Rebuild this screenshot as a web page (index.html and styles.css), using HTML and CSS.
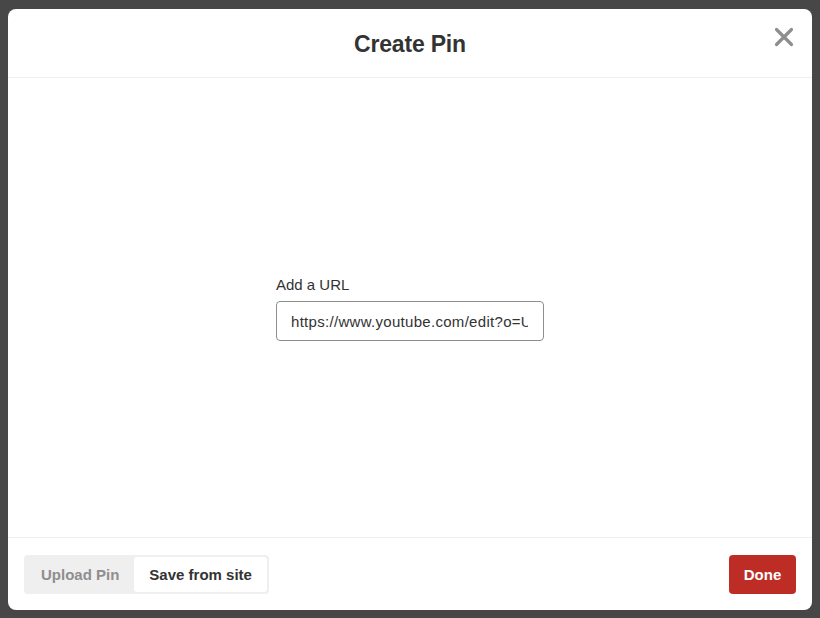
FILE: index.html
```html
<!DOCTYPE html>
<html lang="en">
<head>
    <meta charset="UTF-8">
    <title>Create Pin</title>
    <link rel="stylesheet" href="styles.css">
</head>
<body>
    <div class="modal">
        <div class="modal-header">
            <h1 class="modal-title">Create Pin</h1>
            <button class="close-btn" aria-label="Close">
                <svg width="20" height="20" viewBox="0 0 20 20">
                    <path d="M2.5 2.5 L17.5 17.5 M17.5 2.5 L2.5 17.5" stroke="#8e8e8e" stroke-width="3.2" stroke-linecap="round"/>
                </svg>
            </button>
        </div>

        <div class="modal-body">
            <div class="url-field">
                <label class="url-label" for="url">Add a URL</label>
                <input class="url-input" id="url" type="text" value="https://www.youtube.com/edit?o=U&amp;video_id=">
            </div>
        </div>

        <div class="modal-footer">
            <div class="segmented">
                <button class="segment">Upload Pin</button>
                <button class="segment active">Save from site</button>
            </div>
            <button class="done-btn">Done</button>
        </div>
    </div>
</body>
</html>
```

FILE: styles.css
```css
html, body {
    height: 100%;
}

body {
    margin: 0;
    padding: 9px 8px 8px;
    box-sizing: border-box;
    background-color: #474747;
    font-family: 'Liberation Sans', Arial, sans-serif;
    color: #333;
}

.modal {
    height: 601px;
    background: white;
    border-radius: 8px;
    display: flex;
    flex-direction: column;
    overflow: hidden;
}

/* header */
.modal-header {
    position: relative;
    height: 68px;
    border-bottom: 1px solid #efefef;
    display: flex;
    align-items: center;
    justify-content: center;
}

.modal-title {
    margin: 0;
    font-size: 23px;
    font-weight: bold;
    color: #333;
    letter-spacing: -0.2px;
    padding-top: 2px;
}

.close-btn {
    position: absolute;
    top: 18px;
    right: 18px;
    padding: 0;
    border: none;
    background: none;
    cursor: pointer;
    width: 20px;
    height: 20px;
}

/* body */
.modal-body {
    flex: 1;
    display: flex;
    align-items: center;
    justify-content: center;
    padding-top: 2px;
}

.url-field {
    display: flex;
    flex-direction: column;
    gap: 8px;
}

.url-label {
    font-size: 15px;
    color: #333;
}

.url-input {
    width: 268px;
    height: 40px;
    box-sizing: border-box;
    padding: 0 15px 0 14px;
    border: 1px solid #8e8e8e;
    border-radius: 4px;
    font-family: 'Liberation Sans', Arial, sans-serif;
    font-size: 15px;
    letter-spacing: 0.3px;
    color: #333;
    outline: none;
}

/* footer */
.modal-footer {
    height: 72px;
    border-top: 1px solid #efefef;
    display: flex;
    align-items: center;
    justify-content: space-between;
    padding: 0 16px;
}

.segmented {
    display: flex;
    background: #efefef;
    border-radius: 4px;
    padding: 2px;
    height: 39px;
    box-sizing: border-box;
}

.segment {
    border: none;
    background: none;
    border-radius: 3px;
    padding: 0 15px;
    font-family: 'Liberation Sans', Arial, sans-serif;
    font-size: 15px;
    font-weight: bold;
    color: #8e8e8e;
    cursor: pointer;
}

.segment.active {
    background: white;
    color: #333;
}

.done-btn {
    width: 67px;
    height: 39px;
    border: none;
    border-radius: 4px;
    background: #bd2d26;
    color: white;
    font-family: 'Liberation Sans', Arial, sans-serif;
    font-size: 15px;
    font-weight: bold;
    cursor: pointer;
}
```
